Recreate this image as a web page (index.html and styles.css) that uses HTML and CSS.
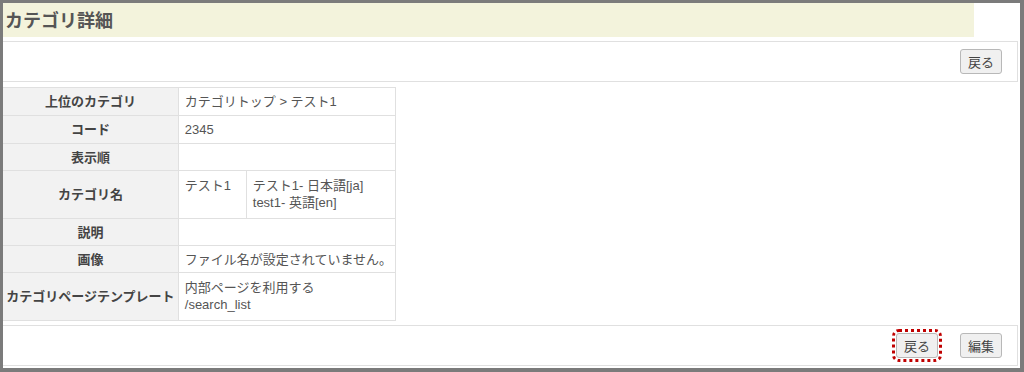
FILE: index.html
```html
<!DOCTYPE html>
<html lang="ja">
<head>
  <meta charset="UTF-8">
  <title>カテゴリ詳細</title>
  <link rel="stylesheet" href="styles.css">
</head>
<body>
  <div class="frame">
    <h1 class="page-title">カテゴリ詳細</h1>

    <!-- top action bar -->
    <div class="action-bar">
      <button class="btn">戻る</button>
    </div>

    <table class="detail">
      <tr>
        <th>上位のカテゴリ</th>
        <td>カテゴリトップ &gt; テスト1</td>
      </tr>
      <tr>
        <th>コード</th>
        <td>2345</td>
      </tr>
      <tr class="short">
        <th>表示順</th>
        <td></td>
      </tr>
      <tr>
        <th>カテゴリ名</th>
        <td class="nested-cell">
          <table class="names">
            <tr>
              <td class="name-main">テスト1</td>
              <td class="name-lang">テスト1- 日本語[ja]<br>test1- 英語[en]</td>
            </tr>
          </table>
        </td>
      </tr>
      <tr class="short">
        <th>説明</th>
        <td></td>
      </tr>
      <tr class="short">
        <th>画像</th>
        <td>ファイル名が設定されていません。</td>
      </tr>
      <tr>
        <th>カテゴリページテンプレート</th>
        <td class="multi">内部ページを利用する<br>/search_list</td>
      </tr>
    </table>

    <!-- bottom action bar -->
    <div class="action-bar bottom">
      <button class="btn focused">戻る</button>
      <button class="btn">編集</button>
    </div>
  </div>
</body>
</html>
```

FILE: styles.css
```css
/* Base */
html, body {
  margin: 0;
  height: 100%;
}
body {
  font-family: "Liberation Sans", "Noto Sans CJK JP", sans-serif;
  font-size: 13px;
  color: #555555;
  background: #ffffff;
}

/* Outer frame */
.frame {
  box-sizing: border-box;
  height: 372px;
  border: 3px solid #7b7b7b;
  border-right-width: 4px;
  border-bottom-width: 4px;
  padding-right: 2px;
}

/* Title */
.page-title {
  margin: 0 44px 0 0;
  height: 34px;
  line-height: 36px;
  padding-left: 2px;
  background: #f3f3dc;
  font-size: 18px;
  font-weight: bold;
  color: #555555;
}

/* Action bars */
.action-bar {
  display: flex;
  justify-content: flex-end;
  align-items: center;
  gap: 22px;
  height: 39px;
  margin-top: 4px;
  padding-right: 15px;
  border: 1px solid #e0e0e0;
  border-left: none;
}
.action-bar.bottom {
  margin-top: 4px;
  height: 39px;
}
.btn {
  font-family: "Liberation Sans", "Noto Sans CJK JP", sans-serif;
  font-size: 13px;
  color: #444444;
  background: #f0f0f0;
  border: 1px solid #b8b8b8;
  border-radius: 3px;
  height: 25px;
  padding: 0 7px;
}
.btn.focused {
  outline: 3px dotted #c00000;
  outline-offset: 1px;
}

/* Detail table */
.detail {
  border-collapse: collapse;
  margin-top: 5px;
  width: 393px;
}
.detail th,
.detail td {
  border: 1px solid #e0e0e0;
  padding: 5px 3px 5px 6px;
  line-height: 17px;
  text-align: left;
  vertical-align: middle;
  white-space: nowrap;
}
.detail th {
  width: 175px;
  background: #f2f2f2;
  color: #444444;
  text-align: center;
  padding-left: 0;
  padding-right: 0;
  border-left: none;
}
.detail td {
  height: 17px;
}
.detail tr.short th,
.detail tr.short td {
  padding-bottom: 4px;
}
.detail td.multi {
  padding-top: 6px;
  padding-bottom: 7px;
}

/* Nested name table */
.detail td.nested-cell {
  padding: 0;
}
.names {
  border-collapse: collapse;
  width: 100%;
}
.names td {
  border: none;
  vertical-align: top;
  padding: 6px 6px 7px;
  line-height: 17px;
}
.names .name-main {
  width: 55px;
  border-right: 1px solid #e0e0e0;
}
```
